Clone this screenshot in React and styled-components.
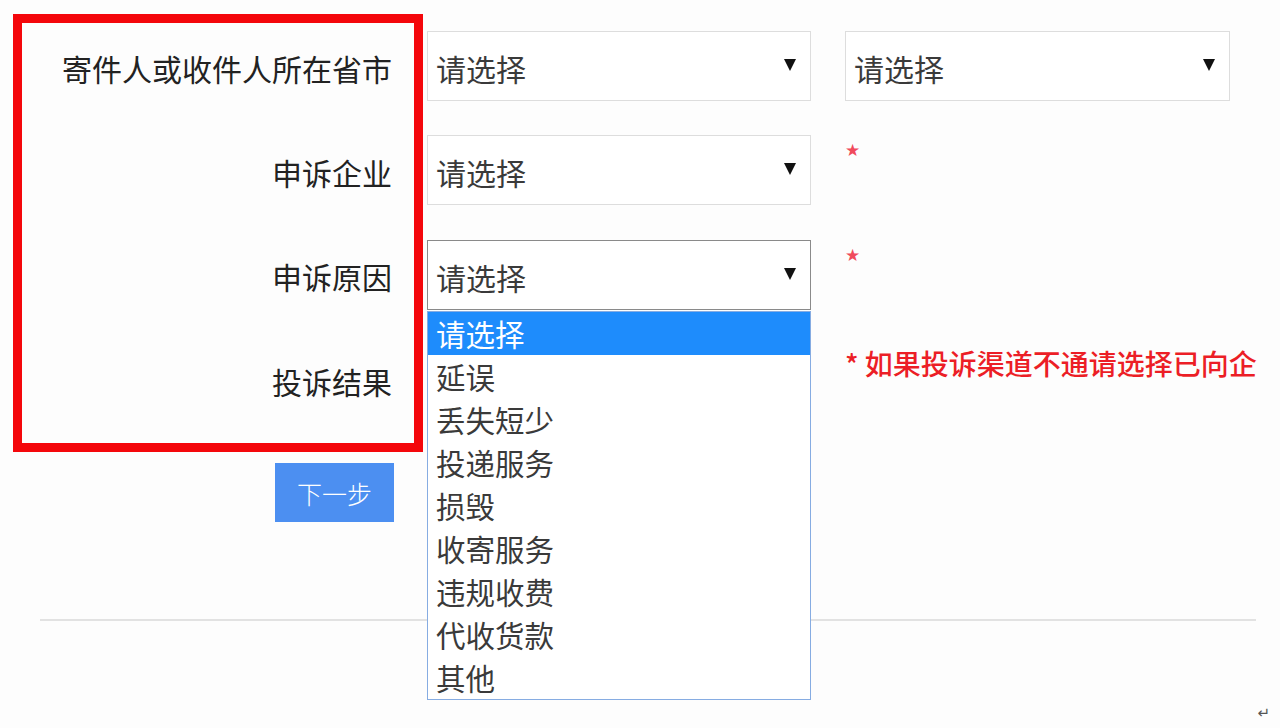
import React from 'react'
import styled, { createGlobalStyle } from 'styled-components'

const GlobalStyle = createGlobalStyle`
  html, body {
    margin: 0;
    padding: 0;
    background: #fdfdfd;
  }
  body {
    font-family: "Noto Sans CJK SC", "Noto Sans", sans-serif;
  }
`

const reasons = ['请选择', '延误', '丢失短少', '投递服务', '损毁', '收寄服务', '违规收费', '代收货款', '其他']

// covered: the select sits under the open list, so its caption is not drawn
function Select({ focused, open, options, covered }) {
  return (
    <SelectWrap>
      <SelectBox focused={focused}>
        <Caption covered={covered}>请选择</Caption>
        <Arrow />
      </SelectBox>
      {open && (
        <DropList>
          {options.map((o, i) => (
            <Option key={o} active={i === 0}>{o}</Option>
          ))}
        </DropList>
      )}
    </SelectWrap>
  )
}

function App() {
  return (
    <Page>
      <GlobalStyle />
      <Form>
        <Label>寄件人或收件人所在省市</Label>
        <Select />
        <Select />

        <Label>申诉企业</Label>
        <Select />
        <Extra><Star>★</Star></Extra>

        <Label>申诉原因</Label>
        <Select focused open options={reasons} />
        <Extra><Star>★</Star></Extra>

        <Label>投诉结果</Label>
        <Select covered />
        <Extra><Note>* 如果投诉渠道不通请选择已向企</Note></Extra>
      </Form>

      <ButtonRow>
        <NextButton>下一步</NextButton>
      </ButtonRow>

      <Divider />

      <Footer>
        <Mark>↵</Mark>
      </Footer>

      <Highlight />
    </Page>
  )
}

export default App

const Page = styled.div`
  position: relative;
  width: 1280px;
  height: 728px;
  box-sizing: border-box;
  padding-top: 31px;
  overflow: hidden;
  background: #fdfdfd;
`

const Form = styled.div`
  display: grid;
  grid-template-columns: 392px 384px 384px;
  grid-auto-rows: 70px;
  column-gap: 35px;
  row-gap: 34.4px;
  & > :nth-child(3n) {
    margin-left: -1px;
  }
`

const Label = styled.div`
  align-self: center;
  text-align: right;
  font-size: 30px;
  line-height: 36px;
  color: #222;
  padding-top: 3px;
`

const SelectWrap = styled.div`
  position: relative;
`

const SelectBox = styled.div`
  height: 70px;
  box-sizing: border-box;
  display: flex;
  align-items: center;
  justify-content: space-between;
  padding: 0 14px 0 8px;
  background: #fff;
  border: 1px solid ${p => (p.focused ? '#8a8a8a' : '#dddddd')};
  font-size: 30px;
  color: #3a3a3a;
`

const Caption = styled.span`
  padding-top: 4px;
  visibility: ${p => (p.covered ? 'hidden' : 'visible')};
`

const Arrow = styled.i`
  width: 0;
  height: 0;
  border-left: 6px solid transparent;
  border-right: 6px solid transparent;
  border-top: 12px solid #111;
  margin-top: -2px;
`

const DropList = styled.div`
  position: absolute;
  top: 100%;
  left: 0;
  width: 100%;
  box-sizing: border-box;
  margin-top: 1px;
  background: #fff;
  border: 1px solid #86ace2;
  z-index: 5;
`

const Option = styled.div`
  height: 43px;
  line-height: 43px;
  padding-left: 8px;
  font-size: 29.5px;
  color: ${p => (p.active ? '#fff' : '#3a3a3a')};
  background: ${p => (p.active ? '#1e8cfc' : 'transparent')};
`

const Extra = styled.div`
  align-self: start;
  padding-top: 4px;
`

const Star = styled.span`
  display: block;
  padding: 2px 0 0 0;
  font-family: "DejaVu Sans", sans-serif;
  font-size: 17px;
  line-height: 18px;
  color: #f04a5c;
`

const Note = styled.div`
  white-space: nowrap;
  font-size: 28px;
  line-height: 30px;
  font-weight: 500;
  color: #ec1e26;
`

const ButtonRow = styled.div`
  width: 394px;
  display: flex;
  justify-content: flex-end;
  margin-top: 49px;
`

const NextButton = styled.button`
  width: 119px;
  height: 59px;
  border: none;
  background: #4c8ff1;
  color: #fff;
  font-family: "Noto Sans CJK SC", sans-serif;
  font-size: 25px;
  font-weight: 300;
  padding: 0;
`

const Divider = styled.div`
  margin: 97px 0 0 40px;
  width: 1216px;
  border-top: 2px solid #e2e2e2;
`

const Footer = styled.div`
  display: flex;
  justify-content: flex-end;
  padding-right: 10px;
  margin-top: 84px;
`

const Mark = styled.span`
  font-family: "DejaVu Sans", sans-serif;
  font-size: 15px;
  line-height: 16px;
  color: #555;
`

const Highlight = styled.div`
  position: absolute;
  left: 13px;
  top: 14px;
  width: 410px;
  height: 438px;
  box-sizing: border-box;
  border: 9px solid #f4070b;
  pointer-events: none;
`
